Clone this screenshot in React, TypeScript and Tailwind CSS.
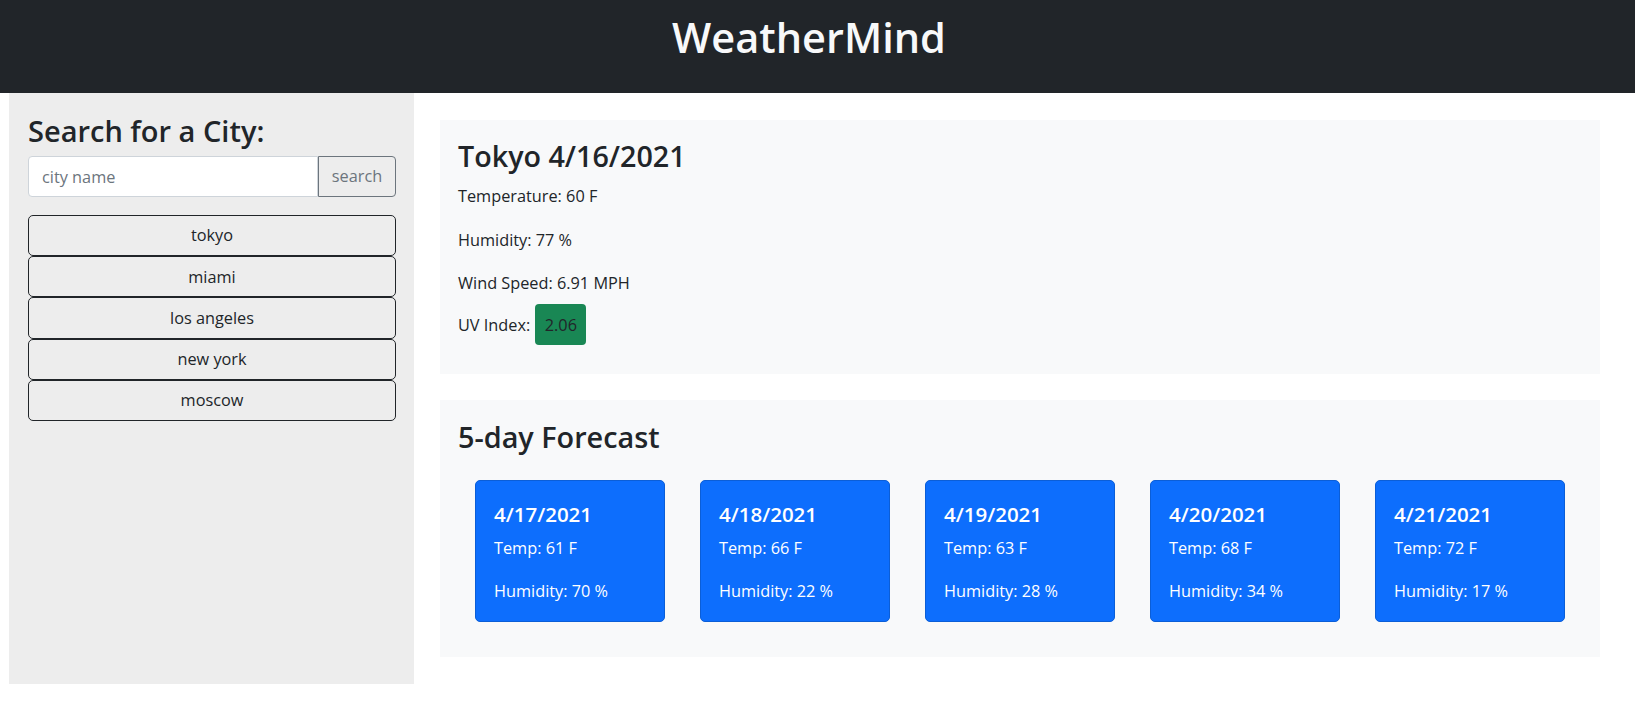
import React from "react";

const cities = ["tokyo", "miami", "los angeles", "new york", "moscow"];

const forecast = [
  { date: "4/17/2021", temp: 61, humidity: 70 },
  { date: "4/18/2021", temp: 66, humidity: 22 },
  { date: "4/19/2021", temp: 63, humidity: 28 },
  { date: "4/20/2021", temp: 68, humidity: 34 },
  { date: "4/21/2021", temp: 72, humidity: 17 },
];

export default function App() {
  return (
    <div
      className="min-h-screen bg-white text-[#212529]"
      style={{ fontFamily: '"Open Sans", "Noto Sans", sans-serif' }}
    >
      {/* header */}
      <header className="h-[93px] bg-[#212529] pr-[17px] pt-[12px] text-center">
        <h1 className="text-[41.5px] font-semibold leading-[50px] text-[#f8f9fa]">
          WeatherMind
        </h1>
      </header>

      <div className="flex pl-[9px]">
        {/* sidebar */}
        <aside className="h-[591px] w-[405px] shrink-0 bg-[#ededed] pl-[19px] pr-[18px] pt-[21px]">
          <h3 className="mb-[8px] text-[29px] font-semibold leading-[34px]">
            Search for a City:
          </h3>
          <div className="flex h-[41px]">
            <input
              type="text"
              placeholder="city name"
              className="h-full min-w-0 flex-1 rounded-l-[4px] border border-[#ced4da] bg-white px-[13px] text-[16.3px] outline-none placeholder:text-[#6c757d]"
            />
            <button className="h-full w-[78px] rounded-r-[4px] border border-[#6c757d] text-[16.3px] text-[#6c757d]">
              search
            </button>
          </div>

          <div className="mt-[18px] flex flex-col">
            {cities.map((city) => (
              <button
                key={city}
                className="h-[41.2px] w-full rounded-[5px] border border-[#212529] text-[16.3px] text-[#212529]"
              >
                {city}
              </button>
            ))}
          </div>
        </aside>

        {/* main */}
        <main className="ml-[26px] mr-[35px] flex flex-1 flex-col gap-[26px] pt-[27px]">
          {/* current weather */}
          <section className="h-[254px] bg-[#f8f9fa] px-[18px] pt-[19px]">
            <h3 className="mb-[10px] text-[28.7px] font-semibold leading-[34px]">
              Tokyo 4/16/2021
            </h3>
            <div className="text-[16.3px] leading-[26px]">
              <p className="mb-[17.5px]">Temperature: 60 F</p>
              <p className="mb-[17.5px]">Humidity: 77 %</p>
              <p className="mb-[8px]">Wind Speed: 6.91 MPH</p>
              <div className="flex h-[41px] items-center gap-[5px]">
                <span>UV Index:</span>
                <span className="flex h-[41px] items-center rounded-[4px] bg-[#198754] px-[9.5px] text-[#212529]">
                  2.06
                </span>
              </div>
            </div>
          </section>

          {/* 5-day forecast */}
          <section className="bg-[#f8f9fa] pb-[35px] pt-[20px]">
            <h3 className="mb-[26px] pl-[18px] text-[28.8px] font-semibold leading-[34px]">
              5-day Forecast
            </h3>
            <div className="flex gap-[35px] px-[35px]">
              {forecast.map((day) => (
                <div
                  key={day.date}
                  className="h-[142px] w-[190px] rounded-[5px] border border-[#0b5ed7] bg-[#0d6efd] px-[18px] pt-[21px] text-white"
                >
                  <h5 className="mb-[8.5px] text-[20.5px] font-semibold leading-[24.5px]">
                    {day.date}
                  </h5>
                  <p className="mb-[16.5px] text-[16.3px] leading-[26px]">Temp: {day.temp} F</p>
                  <p className="text-[16.3px] leading-[26px]">Humidity: {day.humidity} %</p>
                </div>
              ))}
            </div>
          </section>
        </main>
      </div>
    </div>
  );
}
